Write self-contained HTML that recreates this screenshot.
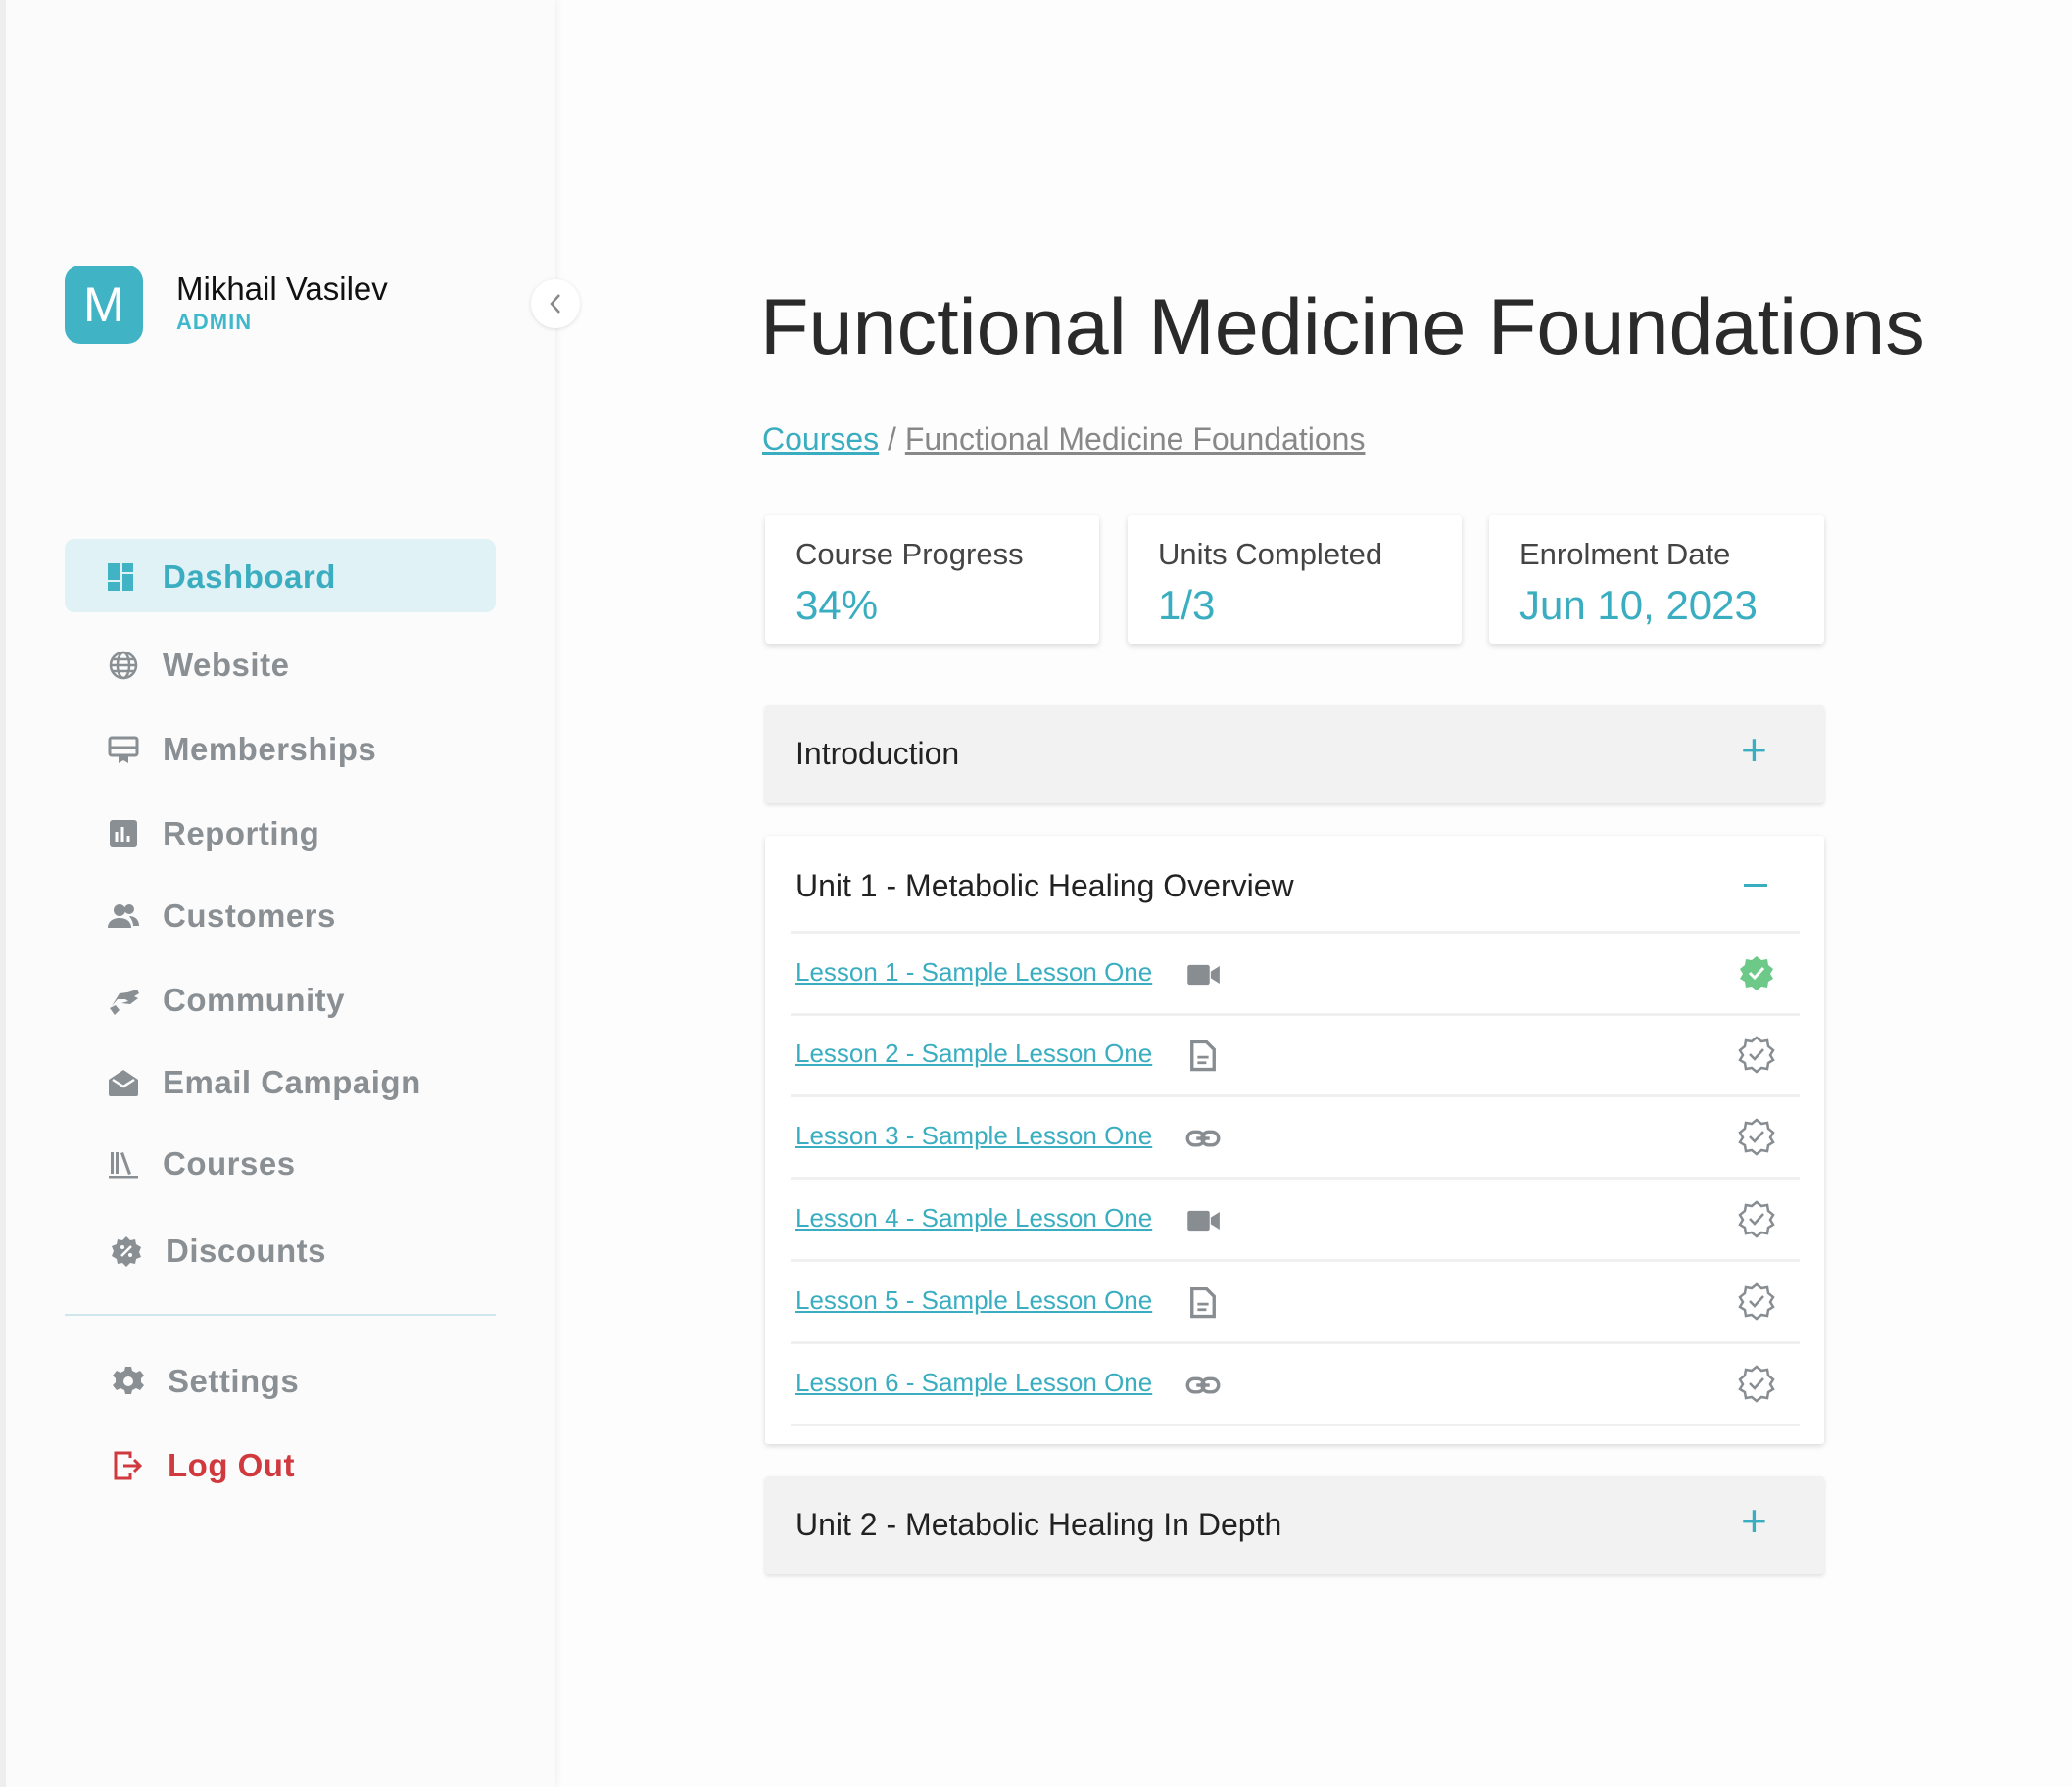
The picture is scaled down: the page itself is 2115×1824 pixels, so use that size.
<!DOCTYPE html>
<html><head><meta charset="utf-8"><style>
*{margin:0;padding:0;box-sizing:border-box}
body{width:2115px;height:1824px;background:#fdfdfd;font-family:"Liberation Sans",sans-serif;position:relative;overflow:hidden}
.abs{position:absolute}
.side{left:0;top:0;width:567px;height:1824px;background:#fbfbfb;border-left:6px solid #eeeeee;box-shadow:2px 0 6px rgba(0,0,0,.05)}
.nav{position:absolute;left:110px;height:40px;display:flex;align-items:center;font-size:33px;font-weight:bold;color:#8a8f94;letter-spacing:.5px}
.nav svg{width:32px;height:32px;margin-right:24px;flex:none}
.card{position:absolute;background:#fff;box-shadow:0 2px 6px rgba(0,0,0,.15);border-radius:4px}
.lbl{position:absolute;left:31px;top:22px;font-size:31px;color:#444}
.val{position:absolute;left:31px;top:68px;font-size:42px;color:#3aaec0}
.acc{position:absolute;left:781px;width:1081px;background:#f2f2f2;box-shadow:0 2px 4px rgba(0,0,0,.12);border-radius:3px}
.acc .h{position:absolute;left:31px;font-size:32px;color:#222}
.acc .plus{position:absolute;left:996px;top:18px;font-size:46px;color:#3aaec0}
.row{position:absolute;left:807px;width:1030px;height:84px;border-bottom:3px solid #f0f0f0}
.row a{position:absolute;left:5px;top:24px;font-size:26px;color:#3aaec0;text-decoration:underline}
.row .t{position:absolute;left:403px;top:26px;width:36px;height:32px}
.row .c{position:absolute;left:966px;top:20px;width:40px;height:40px}
</style></head><body>
<div class="abs side"></div>
<div class="abs" style="left:66px;top:271px;width:80px;height:80px;border-radius:16px;background:#40b3c5;color:#fff;font-size:50px;text-align:center;line-height:80px">M</div>
<div class="abs" style="left:180px;top:276px;font-size:33px;color:#111">Mikhail Vasilev</div>
<div class="abs" style="left:180px;top:316px;font-size:22px;font-weight:bold;color:#3fb8cc;letter-spacing:1px">ADMIN</div>
<div class="abs" style="left:542px;top:285px;width:50px;height:50px;border-radius:50%;background:#fff;box-shadow:0 1px 5px rgba(0,0,0,.12)"><svg width="50" height="50"><path d="M29 16 L21 25 L29 34" fill="none" stroke="#888" stroke-width="2.5"/></svg></div>
<div class="abs" style="left:66px;top:550px;width:440px;height:75px;border-radius:10px;background:#e0f2f6"></div>
<div class="nav" style="top:569px;color:#3aaec0"><svg viewBox="0 0 32 32"><rect x="0" y="2" width="13" height="17" fill="#40b3c5"/><rect x="0" y="21" width="13" height="9" fill="#40b3c5"/><rect x="15" y="2" width="11" height="9" fill="#40b3c5"/><rect x="15" y="13" width="11" height="17" fill="#40b3c5"/></svg>Dashboard</div>
<div class="nav" style="top:659px"><svg viewBox="0 0 32 32" fill="none" stroke="#8a8f94" stroke-width="2.5"><circle cx="16" cy="16" r="13"/><ellipse cx="16" cy="16" rx="6" ry="13"/><path d="M3 16h26M5 10h22M5 22h22"/></svg>Website</div>
<div class="nav" style="top:745px"><svg viewBox="0 0 32 32"><rect x="2" y="4" width="28" height="18" rx="2" fill="none" stroke="#8a8f94" stroke-width="3"/><path d="M2 14h28" stroke="#8a8f94" stroke-width="3"/><path d="M11 22v8l5-3 5 3v-8z" fill="#8a8f94"/></svg>Memberships</div>
<div class="nav" style="top:831px"><svg viewBox="0 0 32 32"><rect x="2" y="2" width="28" height="28" rx="3" fill="#8a8f94"/><path d="M9 24V14M15 24V9M21 24v-6" stroke="#fff" stroke-width="3"/></svg>Reporting</div>
<div class="nav" style="top:915px"><svg viewBox="0 0 32 32" fill="#8a8f94"><circle cx="12" cy="10" r="6"/><circle cx="22" cy="9" r="5"/><path d="M0 28c0-7 6-10 12-10s12 3 12 10z"/><path d="M22 16c5 0 10 3 10 10h-6c0-4-2-7-4-10z"/></svg>Customers</div>
<div class="nav" style="top:1001px"><svg viewBox="0 0 32 32" fill="#8a8f94"><path d="M4 22l6-7h8l3 2-7 2 9 1 8-6-4-2 5-3-2-4-10 3-8 1z"/><path d="M2 24l5 7 5-5-4-5z"/></svg>Community</div>
<div class="nav" style="top:1085px"><svg viewBox="0 0 32 32" fill="#8a8f94"><path d="M1 13L16 3l15 10v15a2 2 0 0 1-2 2H3a2 2 0 0 1-2-2z"/><path d="M5 13l11 7 11-7" fill="none" stroke="#fbfbfb" stroke-width="2.5"/></svg>Email Campaign</div>
<div class="nav" style="top:1168px"><svg viewBox="0 0 32 32" fill="#8a8f94"><rect x="3" y="4" width="3" height="22"/><rect x="8" y="4" width="3" height="22"/><path d="M13 5l3-1 8 22-3 1z"/><rect x="1" y="28" width="30" height="2.5"/></svg>Courses</div>
<div class="nav" style="top:1257px;left:113px"><svg viewBox="0 0 32 32"><path d="M16 1l4 4 5-1 1 5 5 3-2 5 2 5-5 2-1 5-5-1-4 4-4-4-5 1-1-5-5-3 2-5-2-5 5-2 1-5 5 1z" fill="#8a8f94"/><path d="M11 21l10-10" stroke="#fff" stroke-width="2.5"/><circle cx="12" cy="12" r="2" fill="#fff"/><circle cx="20" cy="20" r="2" fill="#fff"/></svg>Discounts</div>
<div class="abs" style="left:66px;top:1341px;width:440px;height:2px;background:#cfe7ec"></div>
<div class="nav" style="top:1390px;left:115px"><svg viewBox="0 0 32 32"><path d="M13 1h6l1 4 4 2 4-2 4 5-3 3v4l3 3-4 5-4-2-4 2-1 4h-6l-1-4-4-2-4 2-4-5 3-3v-4L0 10l4-5 4 2 4-2z" fill="#8a8f94"/><circle cx="16" cy="16" r="5" fill="#fbfbfb"/></svg>Settings</div>
<div class="nav" style="top:1476px;left:115px;color:#d0393e"><svg viewBox="0 0 32 32" fill="none" stroke="#d0393e" stroke-width="3"><path d="M18 8V3H3v26h15v-5"/><path d="M11 16h17M22 10l6 6-6 6"/></svg>Log Out</div>

<div class="abs" style="left:776px;top:288px;font-size:81px;color:#2a2a2a;white-space:nowrap">Functional Medicine Foundations</div>
<div class="abs" style="left:778px;top:430px;font-size:32px;color:#888;white-space:nowrap"><span style="color:#3aaec0;text-decoration:underline">Courses</span> / <span style="text-decoration:underline">Functional Medicine Foundations</span></div>

<div class="card" style="left:781px;top:526px;width:341px;height:131px"><div class="lbl">Course Progress</div><div class="val">34%</div></div>
<div class="card" style="left:1151px;top:526px;width:341px;height:131px"><div class="lbl">Units Completed</div><div class="val">1/3</div></div>
<div class="card" style="left:1520px;top:526px;width:342px;height:131px"><div class="lbl">Enrolment Date</div><div class="val">Jun 10, 2023</div></div>

<div class="acc" style="top:720px;height:100px"><span class="h" style="top:31px">Introduction</span><span class="plus">+</span></div>

<div class="card" style="left:781px;top:853px;width:1081px;height:621px;border-radius:3px"></div>
<div class="abs" style="left:812px;top:886px;font-size:32px;color:#222">Unit 1 - Metabolic Healing Overview</div>
<div class="abs" style="left:1780px;top:902px;width:24px;height:3px;background:#3aaec0"></div>
<div class="abs" style="left:807px;top:950px;width:1030px;height:3px;background:#f0f0f0"></div>

<svg width="0" height="0" style="position:absolute"><defs>
<symbol id="vid" viewBox="0 0 32 28"><rect x="2" y="5" width="20" height="18" rx="2" fill="#888d92"/><path d="M23 11l8-5v16l-8-5z" fill="#888d92"/></symbol>
<symbol id="doc" viewBox="0 0 32 28"><path d="M6 1h13l7 7v18H6z" fill="none" stroke="#888d92" stroke-width="3"/><path d="M11 15h10M11 20h8" stroke="#888d92" stroke-width="2.5"/></symbol>
<symbol id="lnk" viewBox="0 0 32 28"><rect x="2" y="8" width="15" height="12" rx="6" fill="none" stroke="#888d92" stroke-width="3"/><rect x="15" y="8" width="15" height="12" rx="6" fill="none" stroke="#888d92" stroke-width="3"/><path d="M10 14h12" stroke="#888d92" stroke-width="3"/></symbol>
<symbol id="badge" viewBox="0 0 40 40"><path d="M20 3l5 4 6-1 1 6 5 4-3 5 3 5-5 3-1 6-6-1-5 4-5-4-6 1-1-6-5-3 3-5-3-5 5-4 1-6 6 1z" fill="none" stroke="#888d92" stroke-width="2.5"/><path d="M13 20l5 5 9-10" fill="none" stroke="#888d92" stroke-width="2.5"/></symbol>
<symbol id="badgeg" viewBox="0 0 40 40"><path d="M20 3l5 4 6-1 1 6 5 4-3 5 3 5-5 3-1 6-6-1-5 4-5-4-6 1-1-6-5-3 3-5-3-5 5-4 1-6 6 1z" fill="#6cc987"/><path d="M13 20l5 5 9-10" fill="none" stroke="#fff" stroke-width="3"/></symbol>
</defs></svg>

<div class="row" style="top:953px"><a>Lesson 1 - Sample Lesson One</a><svg class="t"><use href="#vid"/></svg><svg class="c"><use href="#badgeg"/></svg></div>
<div class="row" style="top:1036px"><a>Lesson 2 - Sample Lesson One</a><svg class="t"><use href="#doc"/></svg><svg class="c"><use href="#badge"/></svg></div>
<div class="row" style="top:1120px"><a>Lesson 3 - Sample Lesson One</a><svg class="t"><use href="#lnk"/></svg><svg class="c"><use href="#badge"/></svg></div>
<div class="row" style="top:1204px"><a>Lesson 4 - Sample Lesson One</a><svg class="t"><use href="#vid"/></svg><svg class="c"><use href="#badge"/></svg></div>
<div class="row" style="top:1288px"><a>Lesson 5 - Sample Lesson One</a><svg class="t"><use href="#doc"/></svg><svg class="c"><use href="#badge"/></svg></div>
<div class="row" style="top:1372px"><a>Lesson 6 - Sample Lesson One</a><svg class="t"><use href="#lnk"/></svg><svg class="c"><use href="#badge"/></svg></div>

<div class="acc" style="top:1507px;height:100px"><span class="h" style="top:31px">Unit 2 - Metabolic Healing In Depth</span><span class="plus">+</span></div>
</body></html>
